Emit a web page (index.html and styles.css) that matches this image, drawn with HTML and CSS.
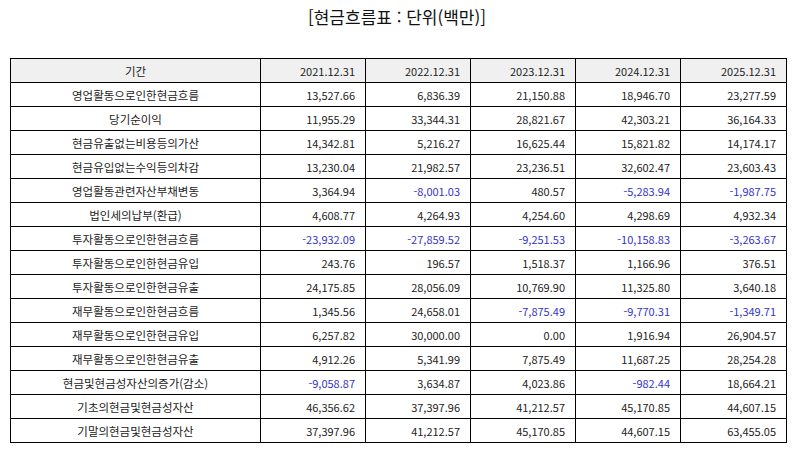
FILE: index.html
```html
<!DOCTYPE html>
<html lang="ko">
<head>
<meta charset="utf-8">
<link rel="stylesheet" href="styles.css">
</head>
<body>
<h1 class="title">[현금흐름표 : 단위(백만)]</h1>
<table class="cf">
<colgroup>
<col class="c-label"><col class="c-num"><col class="c-num"><col class="c-num"><col class="c-num"><col class="c-last">
</colgroup>
<thead>
<tr><th class="label">기간</th><th>2021.12.31</th><th>2022.12.31</th><th>2023.12.31</th><th>2024.12.31</th><th>2025.12.31</th></tr>
</thead>
<tbody>
<tr><td class="label">영업활동으로인한현금흐름</td><td>13,527.66</td><td>6,836.39</td><td>21,150.88</td><td>18,946.70</td><td>23,277.59</td></tr>
<tr><td class="label">당기순이익</td><td>11,955.29</td><td>33,344.31</td><td>28,821.67</td><td>42,303.21</td><td>36,164.33</td></tr>
<tr><td class="label">현금유출없는비용등의가산</td><td>14,342.81</td><td>5,216.27</td><td>16,625.44</td><td>15,821.82</td><td>14,174.17</td></tr>
<tr><td class="label">현금유입없는수익등의차감</td><td>13,230.04</td><td>21,982.57</td><td>23,236.51</td><td>32,602.47</td><td>23,603.43</td></tr>
<tr><td class="label">영업활동관련자산부채변동</td><td>3,364.94</td><td class="neg">-8,001.03</td><td>480.57</td><td class="neg">-5,283.94</td><td class="neg">-1,987.75</td></tr>
<tr><td class="label">법인세의납부(환급)</td><td>4,608.77</td><td>4,264.93</td><td>4,254.60</td><td>4,298.69</td><td>4,932.34</td></tr>
<tr><td class="label">투자활동으로인한현금흐름</td><td class="neg">-23,932.09</td><td class="neg">-27,859.52</td><td class="neg">-9,251.53</td><td class="neg">-10,158.83</td><td class="neg">-3,263.67</td></tr>
<tr><td class="label">투자활동으로인한현금유입</td><td>243.76</td><td>196.57</td><td>1,518.37</td><td>1,166.96</td><td>376.51</td></tr>
<tr><td class="label">투자활동으로인한현금유출</td><td>24,175.85</td><td>28,056.09</td><td>10,769.90</td><td>11,325.80</td><td>3,640.18</td></tr>
<tr><td class="label">재무활동으로인한현금흐름</td><td>1,345.56</td><td>24,658.01</td><td class="neg">-7,875.49</td><td class="neg">-9,770.31</td><td class="neg">-1,349.71</td></tr>
<tr><td class="label">재무활동으로인한현금유입</td><td>6,257.82</td><td>30,000.00</td><td>0.00</td><td>1,916.94</td><td>26,904.57</td></tr>
<tr><td class="label">재무활동으로인한현금유출</td><td>4,912.26</td><td>5,341.99</td><td>7,875.49</td><td>11,687.25</td><td>28,254.28</td></tr>
<tr><td class="label">현금및현금성자산의증가(감소)</td><td class="neg">-9,058.87</td><td>3,634.87</td><td>4,023.86</td><td class="neg">-982.44</td><td>18,664.21</td></tr>
<tr><td class="label">기초의현금및현금성자산</td><td>46,356.62</td><td>37,397.96</td><td>41,212.57</td><td>45,170.85</td><td>44,607.15</td></tr>
<tr><td class="label">기말의현금및현금성자산</td><td>37,397.96</td><td>41,212.57</td><td>45,170.85</td><td>44,607.15</td><td>63,455.05</td></tr>
</tbody>
</table>
</body>
</html>
```

FILE: styles.css
```css
html, body {
  margin: 0;
  padding: 0;
  background: #ffffff;
}
body {
  font-family: "Noto Sans CJK KR", "Noto Sans", sans-serif;
  color: #111;
}
.title {
  margin: 0;
  padding-top: 6px;
  height: 58px;
  box-sizing: border-box;
  text-align: center;
  font-size: 17px;
  font-weight: normal;
  line-height: 22px;
  color: #111;
}
.cf {
  margin-left: 10px;
  width: 776px;
  border-collapse: collapse;
  table-layout: fixed;
  font-size: 11px;
}
.c-label { width: 250px; }
.c-num { width: 105px; }
.c-last { width: 106px; }
.cf th, .cf td {
  border: 1px solid #000;
  height: 23px;
  padding: 0 10px;
  text-align: right;
  font-weight: normal;
  line-height: 14px;
  white-space: nowrap;
  color: #222;
}
.cf thead th {
  background: #f0f0f0;
}
.cf .label {
  text-align: center;
  font-size: 11.5px;
}
.cf .neg {
  color: #3333cc;
}
```
